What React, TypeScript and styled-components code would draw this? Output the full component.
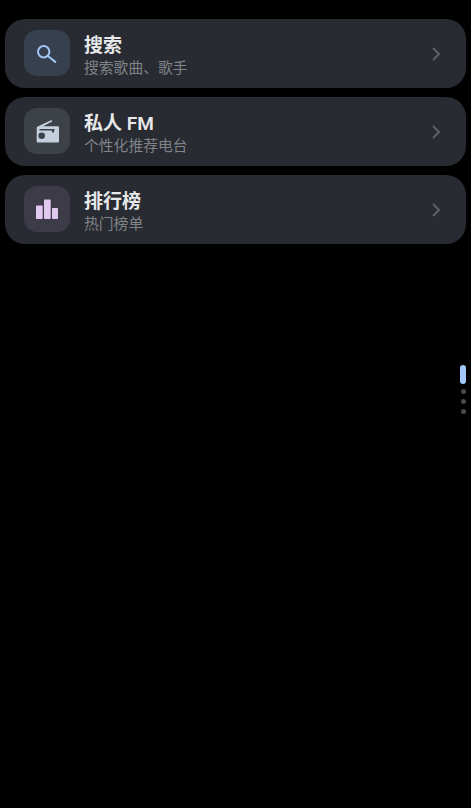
import styled, { createGlobalStyle } from "styled-components";

const GlobalStyle = createGlobalStyle`
  html, body {
    margin: 0;
    padding: 0;
    background: #000;
  }
`;

const items = [
  { title: "搜索", sub: "搜索歌曲、歌手", tint: "#36404e", icon: "search" },
  { title: "私人 FM", sub: "个性化推荐电台", tint: "#3d4249", icon: "radio" },
  { title: "排行榜", sub: "热门榜单", tint: "#3e3b48", icon: "chart" },
];

function MenuIcon({ name }: { name: string }) {
  if (name === "search") {
    return (
      <svg width="24" height="24" viewBox="0 0 24 24" fill="none">
        <circle cx="8.7" cy="10.8" r="5.7" stroke="#a0c6f5" strokeWidth="2" />
        <path d="M12.9 15L20.9 21.4" stroke="#a0c6f5" strokeWidth="2" />
      </svg>
    );
  }
  if (name === "radio") {
    return (
      <svg width="24" height="24" viewBox="0 0 24 24" fill="#c4d0de">
        <path d="M3.3 7.2L16.5 1l.7 1.6L8.1 7.2h14.6c.9 0 1.3.5 1.3 1.3v13.7c0 .8-.5 1.3-1.3 1.3H3c-.9 0-1.3-.5-1.3-1.3V9c0-.9.5-1.4 1.6-1.8z" />
        <circle cx="6.7" cy="16.8" r="3.3" fill="#3d4249" />
        <rect x="4.5" y="10" width="15" height="1.5" fill="#3d4249" />
        <rect x="17" y="10" width="2" height="3.5" fill="#3d4249" />
      </svg>
    );
  }
  return (
    <svg width="24" height="24" viewBox="0 0 24 24" fill="#e0c8ee">
      <rect x="1" y="8.5" width="6.7" height="13.5" rx="0.8" />
      <rect x="9" y="2.5" width="6.7" height="19.5" rx="0.8" />
      <rect x="17" y="11" width="6" height="11" rx="0.8" />
    </svg>
  );
}

export default function App() {
  return (
    <Page>
      <GlobalStyle />
      <List>
        {items.map((item) => (
          <Card key={item.title}>
            <IconBox $tint={item.tint}>
              <MenuIcon name={item.icon} />
            </IconBox>
            <Texts>
              <Title>{item.title}</Title>
              <Sub>{item.sub}</Sub>
            </Texts>
            <Chevron viewBox="0 0 10 16">
              <path d="M2 2l6 6-6 6" fill="none" stroke="#5e6166" strokeWidth="2" />
            </Chevron>
          </Card>
        ))}
      </List>
      <Pager>
        <ActiveDot />
        <Dot />
        <Dot />
        <Dot />
      </Pager>
    </Page>
  );
}

const Page = styled.div`
  position: relative;
  width: 471px;
  height: 808px;
  overflow: hidden;
  background: #000;
  font-family: "Roboto", "Noto Sans CJK SC", sans-serif;
`;

const List = styled.div`
  display: flex;
  flex-direction: column;
  gap: 9px;
  padding: 19px 5px 0;
`;

const Card = styled.div`
  display: flex;
  align-items: center;
  box-sizing: border-box;
  height: 69px;
  padding: 0 25px 1px 19px;
  border-radius: 20px;
  background: #282b31;
`;

const IconBox = styled.div<{ $tint: string }>`
  display: flex;
  align-items: center;
  justify-content: center;
  flex: none;
  width: 46px;
  height: 46px;
  border-radius: 13px;
  background: ${(props) => props.$tint};
`;

const Texts = styled.div`
  display: flex;
  flex-direction: column;
  flex: 1;
  margin: 6px 0 0 14px;
`;

const Title = styled.div`
  color: #e6e8ea;
  font-size: 19px;
  font-weight: 600;
  line-height: 24px;
`;

const Sub = styled.div`
  color: #808388;
  font-size: 14.8px;
  line-height: 20px;
`;

const Chevron = styled.svg`
  flex: none;
  width: 10px;
  height: 16px;
  margin-top: 2px;
`;

const Pager = styled.div`
  position: absolute;
  top: 365px;
  right: 5px;
  display: flex;
  flex-direction: column;
  align-items: center;
  gap: 5px;
`;

const ActiveDot = styled.div`
  width: 6px;
  height: 19px;
  border-radius: 3px;
  background: #a0c8fa;
`;

const Dot = styled.div`
  width: 5px;
  height: 5px;
  border-radius: 50%;
  background: #4a4a4a;
`;
